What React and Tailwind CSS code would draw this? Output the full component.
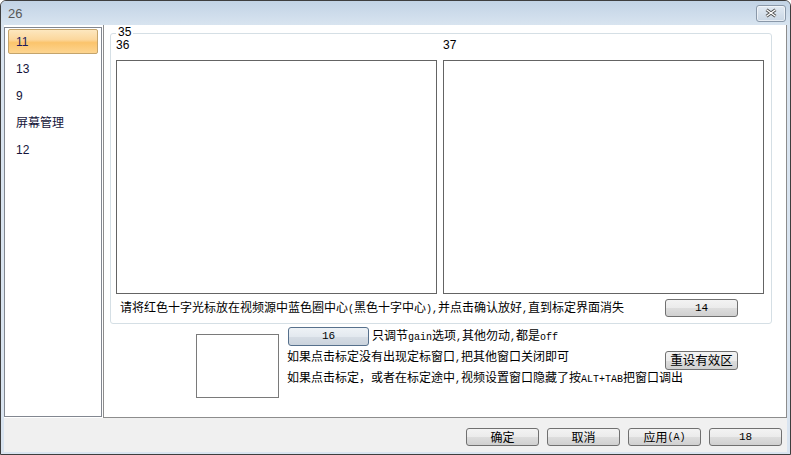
const cjk = "font-[family-name:'Noto_Sans_CJK_SC',sans-serif]";
const sans = "font-[family-name:'Liberation_Sans','Noto_Sans_CJK_SC',sans-serif]";

function M({ children }) {
    return <span className="font-[family-name:'Liberation_Mono',monospace] text-[10px]">{children}</span>;
}

function Btn({ children, className = "", blue = false }) {
    const skin = blue
        ? "border-[#56708c] bg-[linear-gradient(to_bottom,#eef2f6_0%,#e3e9ef_50%,#d6dde5_51%,#cbd3dc_100%)]"
        : "border-[#707070] bg-[linear-gradient(to_bottom,#f3f3f3_0%,#ebebeb_50%,#dddddd_51%,#d0d0d0_100%)]";
    return (
        <div className={`flex items-center justify-center rounded-[3px] border text-black shrink-0 ${skin} ${className}`}>
            {children}
        </div>
    );
}

function CloseBtn() {
    return (
        <div className="w-[30px] h-[17px] rounded-[3px] border border-[#8a98a9] bg-gradient-to-b from-[#e2eaf3] to-[#c9d6e4] flex items-center justify-center shadow-[inset_0_0_0_1px_rgba(255,255,255,0.55)]">
            <svg width="14" height="10" viewBox="0 0 14 10">
                <path d="M2.5 1.8 L11.5 8.2 M11.5 1.8 L2.5 8.2" stroke="#4d4d4d" strokeWidth="3.2" />
                <path d="M2.5 1.8 L11.5 8.2 M11.5 1.8 L2.5 8.2" stroke="#ffffff" strokeWidth="1.4" />
            </svg>
        </div>
    );
}

const ITEMS = ["11", "13", "9", "屏幕管理", "12"];

function SideList() {
    return (
        <div className="w-[98px] h-[390px] mt-[2px] shrink-0 border border-[#828790] bg-white">
            {ITEMS.map((item, i) => (
                <div key={item} className="h-[27px] px-[3px] pt-[1px]">
                    <div
                        className={`h-[25px] flex items-center pl-[7px] rounded-[2px] border text-[12px] ${sans} ${
                            i === 0
                                ? "border-[#c4a46c] bg-[linear-gradient(to_bottom,#fde7bf_0%,#fcd79c_42%,#fbc46c_55%,#fdd590_100%)] text-[#1e1a5c]"
                                : "border-transparent text-[#14143a]"
                        }`}
                    >
                        {item}
                    </div>
                </div>
            ))}
        </div>
    );
}

function VideoColumn({ label }) {
    return (
        <div className="w-[321px] flex flex-col">
            <div className={`h-[14px] leading-[14px] text-[12px] text-black ${sans}`}>{label}</div>
            <div className="mt-[8px] h-[234px] border border-[#646464] bg-white" />
        </div>
    );
}

export default function App() {
    return (
        <div className={`w-[791px] h-[455px] flex flex-col overflow-hidden rounded-t-[6px] border border-[#3e3e3e] bg-[#d9e4f0] ${sans}`}>
            {/* title bar */}
            <div className="h-[24px] shrink-0 flex items-center justify-between pl-[7px] pr-[4px] bg-gradient-to-b from-[#c2d3e5] to-[#d8e4f0]">
                <span className="text-[13px] leading-none text-[#575757]">26</span>
                <CloseBtn />
            </div>

            <div className="flex-1 flex flex-col px-[3px] pb-[2px]">
                <div className="h-[393px] shrink-0 flex bg-white">
                    <SideList />

                    {/* right panel */}
                    <div className="ml-[1px] flex-1 flex flex-col border-l border-r border-b border-[#8d8d8d] bg-white">
                        <div className="relative ml-[6px] mt-[8px] w-[662px] h-[291px] shrink-0 rounded-[3px] border border-[#d5dfe5] pt-[4px] pl-[5px]">
                            <span className="absolute left-[5px] -top-[8px] px-[2px] bg-white text-[12px] leading-[12px] text-black">35</span>

                            <div className="flex gap-[6px]">
                                <VideoColumn label="36" />
                                <VideoColumn label="37" />
                            </div>

                            <div className="mt-[5px] h-[18px] flex items-center">
                                <div className={`w-[549px] pl-[4px] text-[12px] leading-[18px] text-black whitespace-nowrap ${cjk}`}>
                                    请将红色十字光标放在视频源中蓝色圈中心<M>(</M>黑色十字中心<M>)</M><M>,</M>并点击确认放好<M>,</M>直到标定界面消失
                                </div>
                                <Btn className="w-[73px] h-[18px]">
                                    <M>
                                        <span className="text-[11px]">14</span>
                                    </M>
                                </Btn>
                            </div>
                        </div>

                        <div className="flex ml-[92px]">
                            <div className="mt-[10px] w-[83px] h-[64px] shrink-0 border border-[#7a7a7a] bg-white" />

                            <div className={`ml-[8px] mt-[3px] flex flex-col text-[12px] text-black ${cjk}`}>
                                <div className="flex items-center h-[19px]">
                                    <Btn blue className="ml-[1px] w-[81px] h-[19px]">
                                        <M>
                                            <span className="text-[11px]">16</span>
                                        </M>
                                    </Btn>
                                    <span className="ml-[3px] leading-[18px] whitespace-nowrap">
                                        只调节<M>gain</M>选项<M>,</M>其他勿动<M>,</M>都是<M>off</M>
                                    </span>
                                </div>

                                <div className="mt-[1px] flex">
                                    <div className="w-[378px] shrink-0 leading-[18px] whitespace-nowrap">
                                        <div>如果点击标定没有出现定标窗口<M>,</M>把其他窗口关闭即可</div>
                                        <div>
                                            如果点击标定，或者在标定途中<M>,</M>视频设置窗口隐藏了按<M>ALT+TAB</M>把窗口调出
                                        </div>
                                    </div>
                                    <Btn className="mt-[4px] w-[73px] h-[19px] text-[12.5px] leading-none">重设有效区</Btn>
                                </div>
                            </div>
                        </div>
                    </div>
                </div>

                {/* footer buttons */}
                <div className={`flex-1 bg-[#f0f0f0] flex justify-end items-start gap-[8px] pr-[5px] pt-[10px] text-[12px] ${cjk}`}>
                    <Btn className="w-[73px] h-[18px]">确定</Btn>
                    <Btn className="w-[73px] h-[18px]">取消</Btn>
                    <Btn className="w-[73px] h-[18px]">
                        应用<M>(A)</M>
                    </Btn>
                    <Btn className="w-[73px] h-[18px]">
                        <M>
                            <span className="text-[11px]">18</span>
                        </M>
                    </Btn>
                </div>
            </div>
        </div>
    );
}
